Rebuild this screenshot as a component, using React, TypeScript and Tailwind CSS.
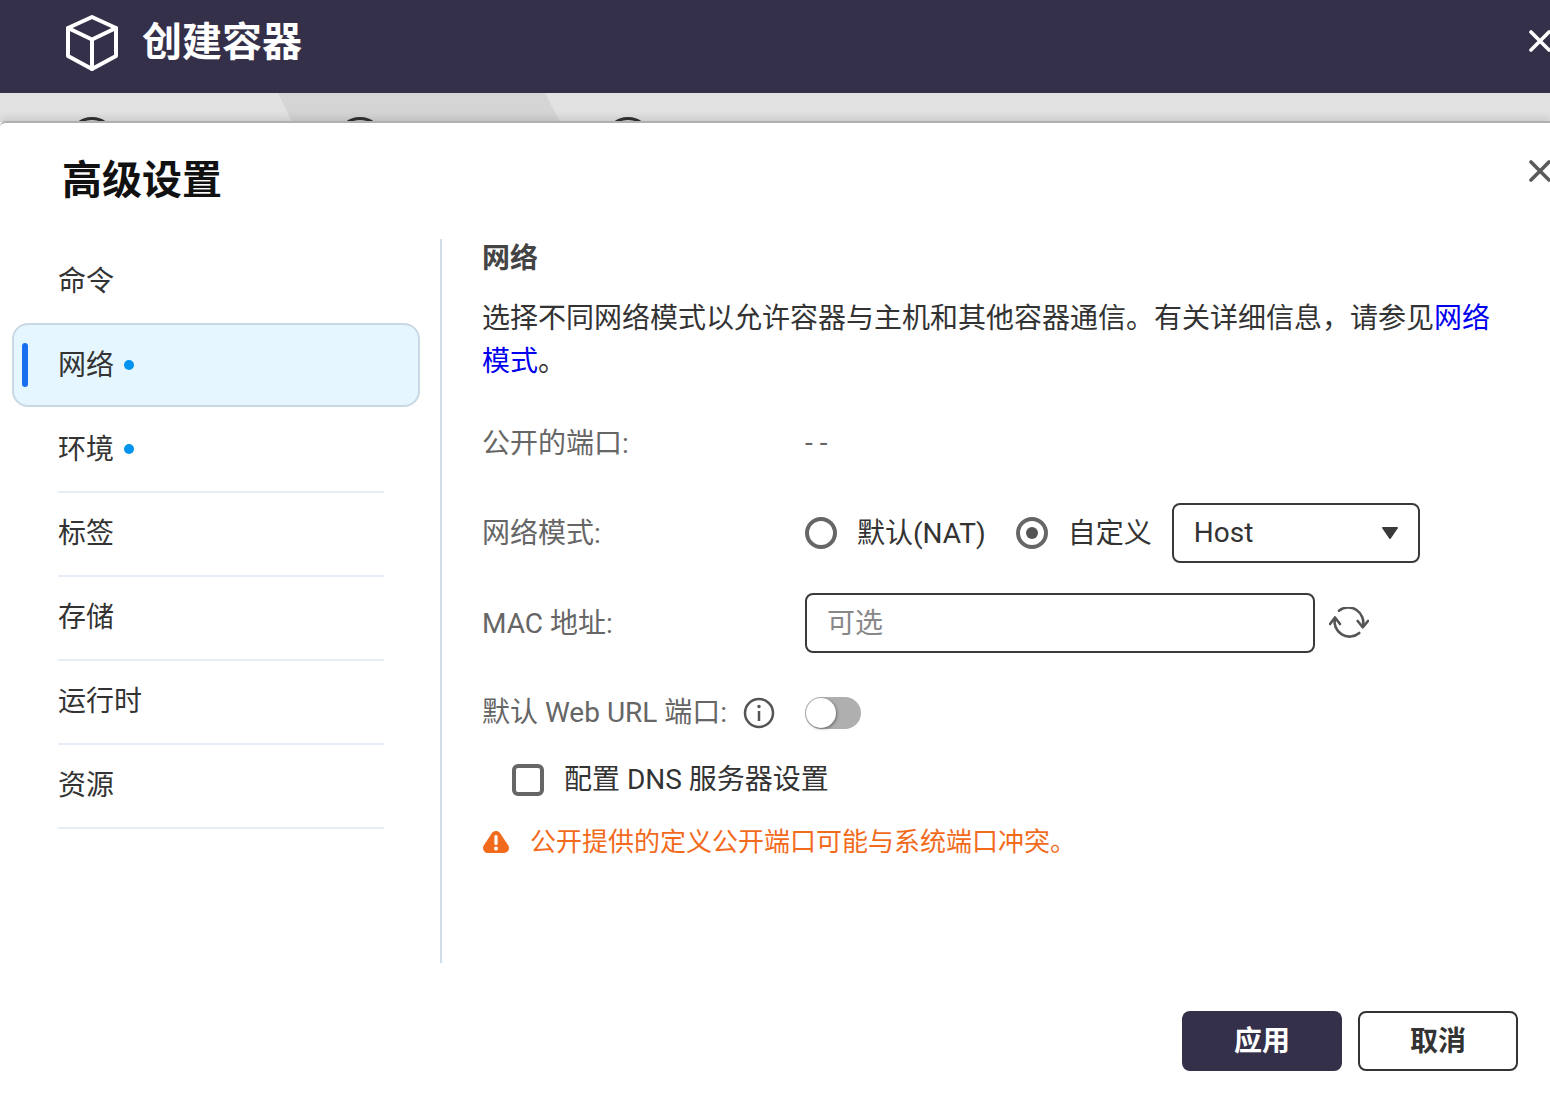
import { ReactNode } from 'react'

const font = 'font-[Roboto,"Noto_Sans_CJK_SC",sans-serif]'

function CloseIcon({ className }: { className: string }) {
  return (
    <svg viewBox="0 0 22 22" className={`h-[22px] w-[22px] shrink-0 ${className}`} fill="none" stroke="currentColor" strokeWidth="3.600" strokeLinecap="round">
      <path d="M2 2 20 20M20 2 2 20" />
    </svg>
  )
}

function Row({ label, children }: { label: ReactNode; children: ReactNode }) {
  return (
    <div className="flex h-[90px] items-center">
      <div className="flex w-[322px] shrink-0 items-center text-[#666]">{label}</div>
      {children}
    </div>
  )
}

function Radio({ checked }: { checked?: boolean }) {
  return (
    <span className="flex h-8 w-8 shrink-0 items-center justify-center rounded-full border-4 border-[#666] bg-white">
      {checked && <span className="h-3 w-3 rounded-full bg-[#555]" />}
    </span>
  )
}

const menu = [
  { name: '命令' },
  { name: '网络', dot: true, active: true },
  { name: '环境', dot: true, line: true, first: true },
  { name: '标签', line: true },
  { name: '存储', line: true },
  { name: '运行时', line: true },
  { name: '资源', line: true },
]

export default function App() {
  return (
    <div className={`flex h-[1102px] w-[1550px] flex-col overflow-hidden bg-white text-[28px] leading-[42px] text-[#333] ${font}`}>
      {/* Title bar */}
      <header className="flex h-[93px] shrink-0 items-center bg-[#353049] pb-2 pl-[65px] text-white">
        <svg viewBox="0 0 54 58" className="h-[58px] w-[54px] shrink-0" fill="none" stroke="currentColor" strokeWidth="4" strokeLinejoin="round" strokeLinecap="round">
          <path d="M27 3 51 14V42L27 55 3 42V14Z" />
          <path d="M3 14 27 25.500 51 14M27 25.500V55" />
        </svg>
        <h1 className="ml-[23px] text-[40px] leading-[56px] font-bold">创建容器</h1>
        <CloseIcon className="mb-1 ml-auto mr-[-1px] text-white" />
      </header>

      {/* Wizard steps, mostly hidden behind the dialog */}
      <div className="flex h-[29px] shrink-0 overflow-hidden bg-[#e2e2e2]">
        <div className="w-[278px] shrink-0 pl-[68px] pt-6">
          <div className="h-12 w-12 rounded-full border-[3px] border-[#333]" />
        </div>
        <div className="w-[282px] shrink-0 bg-[#d5d5d5] pl-[58px] pt-6 [clip-path:polygon(0_0,267px_0,282px_100%,14px_100%)]">
          <div className="h-12 w-12 rounded-full border-[3px] border-[#333]" />
        </div>
        <div className="flex-1 pl-[44px] pt-6">
          <div className="h-12 w-12 rounded-full border-[3px] border-[#333]" />
        </div>
      </div>

      {/* Dialog */}
      <div className="relative -mt-[1px] flex min-h-0 flex-1 flex-col rounded-tl-[6px] border-t-2 border-[#b0b0b0] bg-white shadow-[0_-3px_8px_rgba(0,0,0,0.12)]">
        <div className="flex h-[116px] shrink-0 items-start pl-[62px]">
          <h2 className="mt-[30px] text-[40px] leading-[56px] font-bold text-[#111]">高级设置</h2>
          <CloseIcon className="ml-auto mr-[-1px] mt-[37px] text-[#5a5a5a]" />
        </div>

        <div className="flex h-[724px] shrink-0">
          {/* Side menu */}
          <nav className="h-full w-[442px] shrink-0 border-r-2 border-[#d0dde9] pl-3 pr-[20px]">
            {menu.map((item) => (
              <div
                key={item.name}
                className={
                  item.active
                    ? 'relative flex h-[84px] items-center rounded-[16px] border-2 border-[#c8d8e4] bg-[#e5f6ff] pl-[44px] pt-[2px]'
                    : `flex h-[84px] pl-[46px] pr-[36px] ${item.first ? 'mt-[2px]' : ''} ${item.line ? '' : 'pt-[2px]'}`
                }
              >
                {item.active && <span className="absolute left-[8px] top-[18px] h-[44px] w-[6px] rounded-full bg-[#1a6ff0]" />}
                <div className={`flex h-full flex-1 items-center ${item.line ? 'border-b-2 border-[#e6edf5]' : ''}`}>
                  <span>{item.name}</span>
                  {item.dot && <span className="mb-[2px] ml-[10px] h-[10px] w-[10px] rounded-full bg-[#0093ef]" />}
                </div>
              </div>
            ))}
          </nav>

          {/* Network settings */}
          <main className="min-w-0 flex-1 pl-[41px] pr-[56px]">
            <div className="-ml-px">
              <h3 className="mt-[-1px] h-[42px] font-bold leading-[42px] text-[#444]">网络</h3>
              <p className="mt-[17px] leading-[43px]">
                选择不同网络模式以允许容器与主机和其他容器通信。有关详细信息，请参见<a className="text-[#0000ee]">网络模式</a>。
              </p>
            </div>
            <div className="mt-[15px]">
              <Row label={<span className="-ml-px pt-px">公开的端口:</span>}>
                <span className="text-[#666]">- -</span>
              </Row>
              <Row label={<span className="-ml-px pt-px">网络模式:</span>}>
                <Radio />
                <span className="ml-[20px] pt-px">默认(NAT)</span>
                <span className="ml-[30px]"><Radio checked /></span>
                <span className="ml-[20px] pt-px">自定义</span>
                <div className="ml-[20px] flex h-[60px] w-[248px] items-center justify-between rounded-[8px] border-2 border-[#3a3a3a] pl-[20px] pr-[20px]">
                  <span>Host</span>
                  <svg viewBox="0 0 16 12" className="h-3 w-4 text-[#3a3a3a]" fill="currentColor" stroke="currentColor" strokeWidth="1.500" strokeLinejoin="round">
                    <path d="M0.800 0.800H15.200L8 11.200Z" />
                  </svg>
                </div>
              </Row>
              <Row label={<span className="-ml-px pt-px">MAC 地址:</span>}>
                <div className="flex h-[60px] w-[510px] items-center rounded-[8px] border-2 border-[#3a3a3a] pl-[20px] pt-[2px] text-[#888]">可选</div>
                <svg viewBox="0 0 40 32" className="ml-[14px] h-8 w-10 text-[#555]" fill="none" stroke="currentColor" strokeWidth="2.600" strokeLinecap="round" strokeLinejoin="round">
                  <path d="M10 3.700A15 15 0 0 1 33.700 19.500" />
                  <path d="M30.300 26A15 15 0 0 1 6 11" />
                  <path d="M28.700 14 33.700 20.300 39 14" />
                  <path d="M1 17 6 10.500 11 17" />
                </svg>
              </Row>
              <Row
                label={
                  <>
                    <span className="-ml-px">默认 Web URL 端口:</span>
                    <svg viewBox="0 0 32 32" className="ml-[16px] h-8 w-8 text-[#555]" fill="none" stroke="currentColor" strokeWidth="2.500">
                      <circle cx="16" cy="16" r="14" />
                      <path d="M16 14V24" />
                      <circle cx="16" cy="9.500" r="1.700" fill="currentColor" stroke="none" />
                    </svg>
                  </>
                }
              >
                <div className="ml-0 flex h-8 w-14 items-center rounded-full bg-[#afafaf] pl-[1px]">
                  <span className="h-[30px] w-[30px] rounded-full bg-white shadow-[1px_1px_3px_rgba(0,0,0,0.4)]" />
                </div>
              </Row>
            </div>
            <div className="mt-[1px] flex h-[42px] items-center pl-[29px]">
              <span className="h-8 w-8 shrink-0 rounded-[6px] border-4 border-[#666]" />
              <span className="ml-[20px]">配置 DNS 服务器设置</span>
            </div>
            <div className="mt-[20px] flex h-[42px] items-center text-[26px] text-[#f26b1d]">
              <svg viewBox="0 0 26 26" className="h-[26px] w-[26px] shrink-0">
                <path d="M13 7 5 19H21Z" fill="currentColor" stroke="currentColor" strokeWidth="10" strokeLinejoin="round" />
                <path d="M13 7.500V14.500" stroke="#fff" strokeWidth="3.200" strokeLinecap="round" />
                <circle cx="13" cy="19.500" r="2" fill="#fff" />
              </svg>
              <span className="ml-[21px]">公开提供的定义公开端口可能与系统端口冲突。</span>
            </div>
          </main>
        </div>

        <div className="flex shrink-0 justify-end gap-4 pr-8 pt-[48px]">
          <button className="h-[60px] w-40 rounded-[8px] bg-[#353049] pt-px font-bold text-white">应用</button>
          <button className="h-[60px] w-40 rounded-[8px] border-2 border-[#333] bg-white pt-px font-bold text-[#333]">取消</button>
        </div>
      </div>
    </div>
  )
}
